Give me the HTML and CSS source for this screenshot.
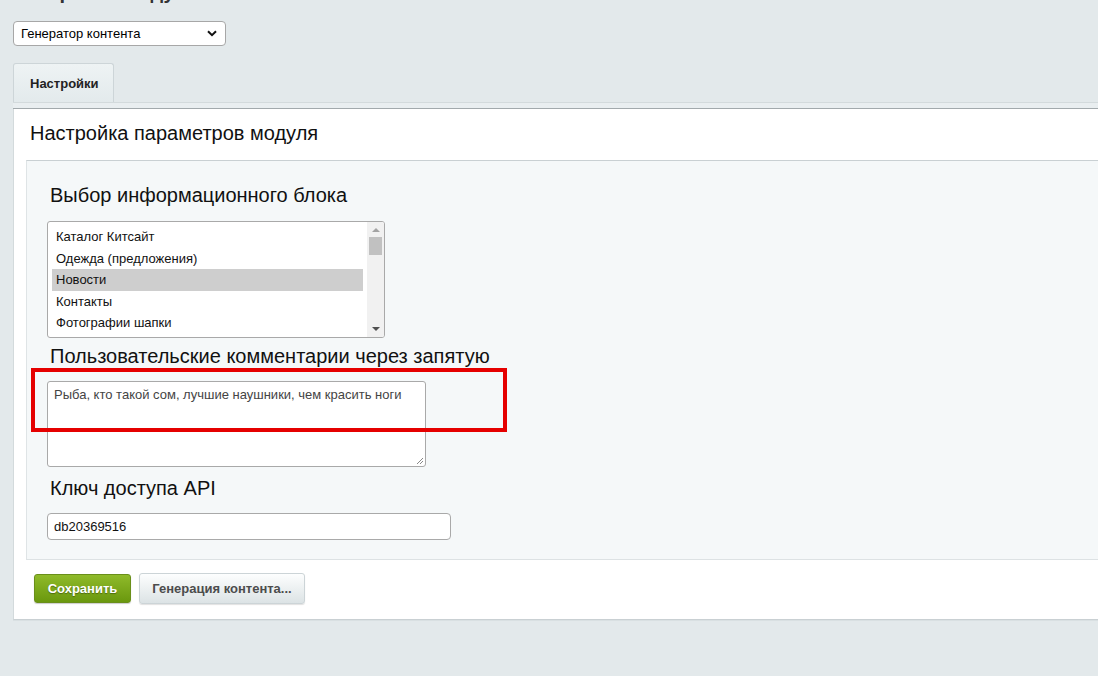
FILE: index.html
```html
<!DOCTYPE html>
<html lang="ru">
<head>
<meta charset="utf-8">
<title>Настройки модуля</title>
<link rel="stylesheet" href="styles.css">
</head>
<body>
<div class="page">
  <h1 class="page-title">Настройки модуля</h1>

  <div class="module-select">
    <span class="module-select-text">Генератор контента</span>
    <svg class="chevron" width="10" height="7" viewBox="0 0 10 7"><path d="M1 1.2 L5 5.2 L9 1.2" fill="none" stroke="#111" stroke-width="2"/></svg>
  </div>

  <div class="tabs">
    <div class="tab active">Настройки</div>
  </div>
  <div class="tab-strip"></div>

  <div class="panel">
    <h2 class="panel-title">Настройка параметров модуля</h2>

    <div class="inner">
      <div class="field-label label-first">Выбор информационного блока</div>
      <div class="listbox" role="listbox">
        <div class="list-items">
          <div class="list-item">Каталог Китсайт</div>
          <div class="list-item">Одежда (предложения)</div>
          <div class="list-item selected">Новости</div>
          <div class="list-item">Контакты</div>
          <div class="list-item">Фотографии шапки</div>
        </div>
        <div class="scrollbar">
          <div class="arrow arrow-up"></div>
          <div class="thumb"></div>
          <div class="arrow arrow-down"></div>
        </div>
      </div>

      <div class="field-label label-second">Пользовательские комментарии через запятую</div>
      <div class="textarea">
        Рыба, кто такой сом, лучшие наушники, чем красить ноги
        <svg class="resize" width="8" height="8" viewBox="0 0 8 8"><path d="M7 1 L1 7 M7 4 L4 7" stroke="#888" stroke-width="1"/></svg>
      </div>

      <div class="field-label label-third">Ключ доступа API</div>
      <div class="text-input">db20369516</div>
    </div>

    <div class="buttons">
      <button class="btn btn-save">Сохранить</button>
      <button class="btn btn-default">Генерация контента...</button>
    </div>
  </div>
</div>
<div class="annotation"></div>
</body>
</html>
```

FILE: styles.css
```css
html, body {
  margin: 0;
  padding: 0;
  overflow: hidden;
}

body {
  position: relative;
  background: #e3e9eb;
  font-family: "Liberation Sans", Arial, sans-serif;
  color: #000;
  width: 1098px;
  height: 676px;
}

.page {
  padding: 0 0 0 13px;
}

.page-title {
  margin: -18px 0 0 0;
  height: 20px;
  font-size: 20px;
  line-height: 20px;
  font-weight: bold;
  color: #333;
}

.module-select {
  margin-top: 19px;
  height: 23px;
  border: 1px solid #a7a7a7;
  border-radius: 4px;
  background: #fff;
  display: flex;
  align-items: center;
  justify-content: space-between;
  padding: 0 8px 0 7px;
  box-sizing: content-box;
  width: 196px;
  font-size: 13px;
  color: #000;
}

.chevron {
  display: block;
}

.tabs {
  margin-top: 17px;
  display: flex;
}

.tab {
  width: 99px;
  height: 38px;
  border: 1px solid #cdd5d8;
  border-bottom: none;
  border-radius: 3px 3px 0 0;
  background: linear-gradient(#eef3f4, #e3eaec);
  box-sizing: content-box;
  font-size: 13px;
  font-weight: bold;
  color: #222;
  display: flex;
  align-items: center;
  text-indent: 16px;
}

.tab-strip {
  height: 5px;
  border-top: 1px solid #d3dadc;
  border-bottom: 1px solid #a2a9ac;
  background: #e9eef0;
}

.panel {
  background: #fff;
  border-left: 1px solid #d3dadc;
  border-bottom: 1px solid #c9d0d3;
  box-shadow: 0 1px 0 #d9e0e2;
  padding: 12px 0 15px 12px;
}

.panel-title {
  margin: 0 0 15px 0;
  padding-left: 4px;
  font-size: 20px;
  line-height: 24px;
  font-weight: normal;
  color: #111;
}

.inner {
  background: #f5f8f9;
  border-top: 1px solid #c9d0d3;
  border-left: 1px solid #dfe4e6;
  border-bottom: 1px solid #dde2e4;
  padding: 22px 0 19px 20px;
}

.field-label {
  font-size: 20px;
  line-height: 24px;
  padding-left: 3px;
  color: #111;
}

.label-first {
  margin-bottom: 14px;
}

.label-second {
  margin-top: 6px;
  margin-bottom: 13px;
}

.label-third {
  margin-top: 9px;
  margin-bottom: 13px;
}

.listbox {
  width: 336px;
  height: 115px;
  border: 1px solid #a9a9a9;
  border-radius: 3px;
  background: #fff;
  display: flex;
  overflow: hidden;
}

.list-items {
  flex: 1;
  padding: 4px 4px 0 4px;
}

.list-item {
  height: 21.5px;
  line-height: 21.5px;
  font-size: 13px;
  padding-left: 4px;
  color: #111;
  white-space: nowrap;
}

.list-item.selected {
  background: #cecece;
}

.scrollbar {
  width: 17px;
  background: #f1f1f1;
  display: flex;
  flex-direction: column;
  align-items: center;
}

.arrow {
  width: 0;
  height: 0;
  border-left: 4px solid transparent;
  border-right: 4px solid transparent;
}

.arrow-up {
  margin-top: 6px;
  border-bottom: 4px solid #a3a3a3;
}

.arrow-down {
  margin-top: auto;
  margin-bottom: 6px;
  border-top: 4px solid #505050;
}

.thumb {
  width: 13px;
  height: 18px;
  margin-top: 5px;
  background: #c1c1c1;
}

.textarea {
  position: relative;
  width: 365px;
  height: 74px;
  border: 1px solid #a9a9a9;
  border-radius: 3px;
  background: #fff;
  padding: 5px 6px;
  font-size: 13px;
  line-height: 16px;
  color: #444;
}

.resize {
  position: absolute;
  right: 1px;
  bottom: 1px;
}

.text-input {
  width: 396px;
  height: 25px;
  border: 1px solid #a9a9a9;
  border-radius: 4px;
  background: #fff;
  padding: 0 0 0 6px;
  font-size: 13px;
  line-height: 25px;
  color: #111;
}

.buttons {
  display: flex;
  align-items: center;
  gap: 8px;
  margin-top: 13px;
  padding-left: 8px;
}

.btn {
  font-family: "Liberation Sans", Arial, sans-serif;
  font-size: 13px;
  font-weight: bold;
  border-radius: 3px;
  cursor: pointer;
  margin: 0;
}

.btn-save {
  width: 97px;
  height: 29px;
  color: #fff;
  background: linear-gradient(#8fba2a, #6a980e);
  border: 1px solid #6a8f1a;
  text-shadow: 0 1px 1px rgba(0, 0, 0, 0.35);
  box-shadow: 0 1px 1px rgba(0, 0, 0, 0.2);
}

.btn-default {
  width: 166px;
  height: 31px;
  color: #4c4c4c;
  background: linear-gradient(#fdfefe, #dce3e5);
  border: 1px solid #ccd4d7;
  box-shadow: 0 1px 1px rgba(0, 0, 0, 0.12);
}

.annotation {
  position: absolute;
  left: 31px;
  top: 368px;
  width: 468px;
  height: 56px;
  border: 4px solid #e50000;
}
```
